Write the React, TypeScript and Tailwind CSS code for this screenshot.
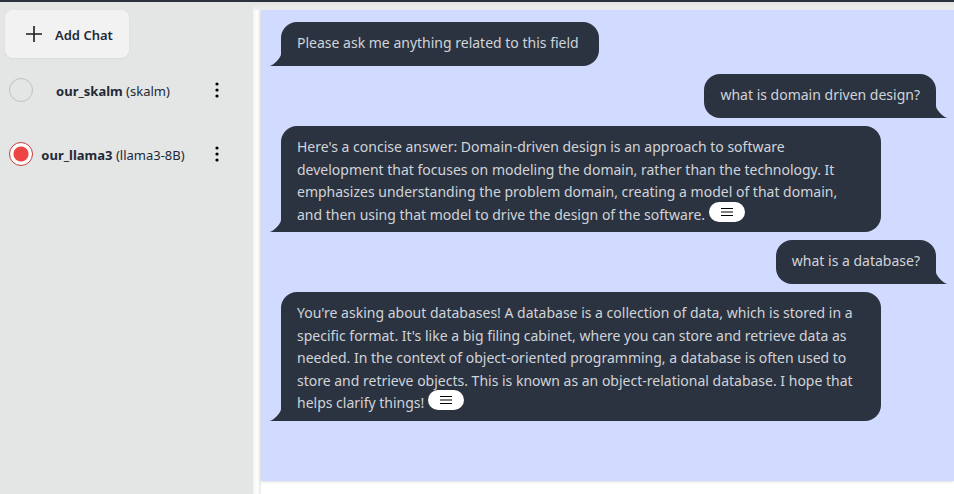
import React from "react";

type Message = { from: "bot" | "user"; text: string; menu?: boolean };

const messages: Message[] = [
  { from: "bot", text: "Please ask me anything related to this field" },
  { from: "user", text: "what is domain driven design?" },
  {
    from: "bot",
    menu: true,
    text: "Here's a concise answer: Domain-driven design is an approach to software development that focuses on modeling the domain, rather than the technology. It emphasizes understanding the problem domain, creating a model of that domain, and then using that model to drive the design of the software.",
  },
  { from: "user", text: "what is a database?" },
  {
    from: "bot",
    menu: true,
    text: "You're asking about databases! A database is a collection of data, which is stored in a specific format. It's like a big filing cabinet, where you can store and retrieve data as needed. In the context of object-oriented programming, a database is often used to store and retrieve objects. This is known as an object-relational database. I hope that helps clarify things!",
  },
];

const chats = [
  { name: "our_skalm", model: "skalm" },
  { name: "our_llama3", model: "llama3-8B" },
];

function Bubble({ message }: { message: Message }) {
  const mine = message.from === "user";
  return (
    <div className={mine ? "flex justify-end pr-[18px]" : "flex pl-5"}>
      <div
        className={
          "relative min-h-11 max-w-[600px] rounded-2xl bg-[#2c3340] pt-2.5 pb-1.5 pl-4 text-sm leading-[1.61] text-[#d0d4da] " +
          (mine ? "rounded-br-none pr-4" : message.menu ? "rounded-bl-none pr-4" : "rounded-bl-none pr-5")
        }
      >
        {message.text}
        {message.menu && (
          <>
            {" "}
            <button
              type="button"
              aria-label="Message details"
              className="-my-1 inline-flex h-5 w-9 items-center justify-center rounded-full bg-white align-[4px] text-black"
            >
              <svg width="12" height="8" viewBox="0 0 12 8" shapeRendering="crispEdges">
                <path d="M0 0h12v1H0zM0 7h12v1H0z" fill="#000" />
                <path d="M0 3h12v2H0z" fill="#808080" />
              </svg>
            </button>
          </>
        )}
        <svg
          viewBox="0 0 3 3"
          className={
            mine
              ? "absolute bottom-0 left-full h-3 w-3 -scale-x-100 text-[#2c3340]"
              : "absolute right-full bottom-0 h-3 w-3 text-[#2c3340]"
          }
          aria-hidden="true"
        >
          <path d="M0 3H3V0C3 1 1 3 0 3" fill="currentColor" />
        </svg>
      </div>
    </div>
  );
}

export default function App() {
  const [selected, setSelected] = React.useState("our_llama3");
  return (
    <div className="flex h-screen flex-col overflow-hidden border-t-2 border-[#2a303c] bg-white font-['Noto_Sans',sans-serif] text-[#1f2937]">
      <div className="flex min-h-0 flex-1">
        <aside className="w-[253px] shrink-0 bg-[#e4e6e5] px-[5px] pt-2">
          <button
            type="button"
            className="flex h-12 items-center gap-3 rounded-lg bg-[#f2f2f2] pr-4 pl-5 text-[13px] font-semibold shadow-xs"
          >
            <svg width="18" height="18" viewBox="0 0 18 18" fill="none" stroke="#1b1d22" strokeWidth="1.6">
              <path d="M9 1v16M1 9h16" />
            </svg>
            <span className="pt-1">Add Chat</span>
          </button>
          <ul>
            {chats.map((chat) => (
              <li key={chat.name} className="flex h-16 items-center pl-1">
                <input
                  id={chat.name}
                  type="radio"
                  name="chat"
                  checked={selected === chat.name}
                  onChange={() => setSelected(chat.name)}
                  className="h-6 w-6 shrink-0 appearance-none rounded-full border border-[#bfc1c1] checked:border-[#c93c40] checked:bg-[radial-gradient(circle,#ef4444_7px,white_8px)]"
                />
                <label htmlFor={chat.name} className="w-40 pt-1 text-center text-[13px]">
                  <b>{chat.name}</b> ({chat.model})
                </label>
                <button type="button" aria-label={"Options for " + chat.name} className="flex w-12 justify-center">
                  <svg width="4" height="16" viewBox="0 0 4 16" fill="#000">
                    <circle cx="2" cy="2" r="1.6" />
                    <circle cx="2" cy="8" r="1.6" />
                    <circle cx="2" cy="14" r="1.6" />
                  </svg>
                </button>
              </li>
            ))}
          </ul>
        </aside>
        <main className="flex min-w-0 flex-1 flex-col">
          <div className="h-2 shrink-0 bg-linear-to-b from-[#e2e2e2] to-[#efefef]" />
          <div className="flex min-h-0 flex-1">
            <div className="w-2 shrink-0 bg-linear-to-r from-[#f1f1f1] via-white to-[#e9e9e9]" />
            <div className="min-w-0 flex-1">
              <section className="flex min-h-[471px] flex-col gap-2 bg-[#d1dbff] pt-3 shadow-sm">
                {messages.map((message) => (
                  <Bubble key={message.text} message={message} />
                ))}
              </section>
            </div>
          </div>
        </main>
      </div>
    </div>
  );
}
